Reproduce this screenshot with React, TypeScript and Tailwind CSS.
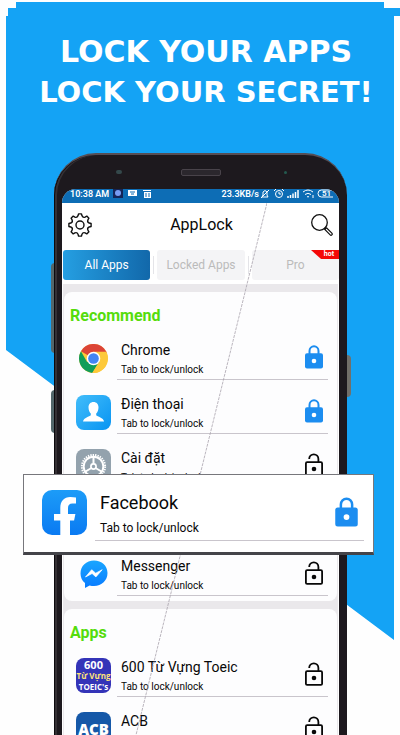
import React from "react";

const toothed = (teeth: number, outer: number, inner: number) => {
  const step = (Math.PI * 2) / teeth;
  const at = (r: number, a: number) =>
    `${(12 + r * Math.sin(a)).toFixed(2)} ${(12 - r * Math.cos(a)).toFixed(2)}`;
  let d = "";
  for (let i = 0; i < teeth; i++) {
    const a = i * step;
    d += `${i === 0 ? "M" : "L"}${at(outer, a - step * 0.17)}`;
    d += `L${at(outer, a + step * 0.17)}`;
    d += `L${at(inner + 0.4, a + step * 0.27)}`;
    d += `Q${at(inner - 1.4, a + step * 0.5)} ${at(inner + 0.4, a + step * 0.73)}`;
  }
  return d + "Z";
};

function GearIcon() {
  return (
    <svg viewBox="0 0 24 24" className="size-6" fill="none" stroke="#111" strokeWidth="1.4" strokeLinejoin="round">
      <path d={toothed(8, 11.2, 9)} />
      <circle cx="12" cy="12" r="4" />
    </svg>
  );
}

function SearchIcon() {
  return (
    <svg viewBox="0 0 22 22" className="size-[22px]" fill="none" stroke="#111" strokeLinecap="round">
      <circle cx="8.5" cy="8.5" r="7.8" strokeWidth="1.3" />
      <path d="M14.8 14.8 20 20" strokeWidth="3.6" />
      <path d="M15.4 15.4 20 20" strokeWidth="1.2" stroke="#fff" />
    </svg>
  );
}

function LockIcon({ locked, large = false }: { locked: boolean; large?: boolean }) {
  return (
    <svg viewBox="0 0 18 24" className={large ? "h-[30px] w-[23px]" : "h-6 w-[18px]"} fill="none">
      {locked ? (
        <>
          <path d="M4.5 10V6a4.5 4.7 0 0 1 9 0v4" stroke="#1c8df0" strokeWidth="2" />
          <rect x="0" y="8.3" width="18" height="15.2" rx="2" fill="#1c8df0" />
          <circle cx="9" cy="16" r="2.3" fill="#fff" />
        </>
      ) : (
        <>
          <path d="M4.2 6a4.6 4.7 0 0 1 9.2 0v3" stroke="#080808" strokeWidth="1.8" />
          <rect x="0.9" y="9.2" width="16.2" height="13.7" rx="1.2" stroke="#080808" strokeWidth="1.8" />
          <circle cx="9" cy="16" r="2.3" fill="#080808" />
        </>
      )}
    </svg>
  );
}

function ChromeIcon() {
  return (
    <svg viewBox="0 0 48 48" className="size-[29px]">
      <circle cx="24" cy="24" r="24" fill="#fdc93a" />
      <path d="M24 24 3.2 12A24 24 0 0 1 44.8 12L46 14H24Z" fill="#dc4437" />
      <path d="M3.2 12A24 24 0 0 0 22 47.9L33.5 29.5 24 24 13.6 30Z" fill="#109d59" />
      <path d="M44.8 13H24L33.5 29.5 22 47.9A24 24 0 0 0 44.8 13Z" fill="#fdc93a" />
      <circle cx="24" cy="24" r="11.2" fill="#fff" />
      <circle cx="24" cy="24" r="8.8" fill="#4285f4" />
    </svg>
  );
}

function ContactIcon() {
  return (
    <svg viewBox="0 0 35 35" className="size-[35px]">
      <defs>
        <linearGradient id="contact" x1="0" y1="0" x2="1" y2="1">
          <stop stopColor="#42bdfa" />
          <stop offset="1" stopColor="#0894f2" />
        </linearGradient>
      </defs>
      <rect width="35" height="35" rx="8" fill="url(#contact)" />
      <path d="M17.5 7c3 0 5 2.200 5 5.300 0 2.900-1 5-2.300 6.200v1.700c1.200 1.500 7.300 2.200 7.900 6.300H7c.6-4.100 6.500-4.800 7.800-6.300v-1.700c-1.300-1.200-2.300-3.300-2.300-6.200C12.500 9.200 14.500 7 17.500 7Z" fill="#fff" />
    </svg>
  );
}

function CogTileIcon() {
  return (
    <svg viewBox="0 0 35 35" className="size-[35px]">
      <rect width="35" height="35" rx="8" fill="#93a2ad" />
      <g fill="none" stroke="#fff">
        <circle cx="17.500" cy="17.500" r="11.600" strokeWidth="2" strokeDasharray="1.400 1.030" />
        <circle cx="17.500" cy="17.500" r="9.800" strokeWidth="1.900" />
        <path d="M17.500 15V8M15.500 19 9.500 22.500M19.500 19l6 3.500" strokeWidth="2" />
        <circle cx="17.500" cy="17.500" r="2.600" strokeWidth="1.700" />
      </g>
    </svg>
  );
}

function MessengerIcon() {
  return (
    <svg viewBox="0 0 28 29" className="h-[29px] w-7">
      <defs>
        <linearGradient id="chat" x1="0" y1="0" x2="0" y2="1">
          <stop stopColor="#19a6ff" />
          <stop offset="1" stopColor="#087bff" />
        </linearGradient>
      </defs>
      <path d="M14 .5C6.300.500.500 6 .500 13.400c0 4 1.700 7.200 4.500 9.600V28l4.600-2.600c1.400.4 2.900.6 4.400.6 7.700 0 13.500-5.500 13.500-12.900S21.700.5 14 .5Z" fill="url(#chat)" />
      <path d="m5.500 17 6.200-7.300 4 3.500 6.500-3.500-6.300 7.200-3.800-3.400Z" fill="#fff" stroke="#fff" strokeWidth=".7" strokeLinejoin="round" />
    </svg>
  );
}

function FacebookIcon() {
  return (
    <svg viewBox="0 0 45 45" className="size-[45px] shrink-0">
      <defs>
        <linearGradient id="fb" x1="0" y1="0" x2="0" y2="1">
          <stop stopColor="#1c9cf8" />
          <stop offset="1" stopColor="#0a7af2" />
        </linearGradient>
      </defs>
      <rect width="45" height="45" rx="10" fill="url(#fb)" />
      <path d="M18.300 45V30.500H12V24h6.300V18c0-7 3.700-11 10-11 2.200 0 4 .2 5.700.5v6h-3.600c-3 0-4.400 1.500-4.400 4.500v6h7.400l-1.300 6.500H28V45Z" fill="#fff" />
    </svg>
  );
}

function ToeicIcon() {
  return (
    <span className="flex size-[35px] flex-col items-center justify-between overflow-hidden rounded-lg bg-[#3434b8] py-px font-['Open_Sans',sans-serif] leading-[11px] font-bold whitespace-nowrap text-white">
      <span className="text-[11px]">600</span>
      <span className="text-[8px] text-[#ffe37a]">Từ Vựng</span>
      <span className="text-[8px]">TOEIC's</span>
    </span>
  );
}

function AcbIcon() {
  return (
    <span className="flex size-[35px] items-end justify-center rounded-lg bg-[#1558a8] pb-2 font-['Open_Sans',sans-serif] text-[15px] leading-5 font-extrabold text-white">
      ACB
    </span>
  );
}

function AppRow({ name, icon, locked = false }: { name: string; icon: React.ReactNode; locked?: boolean }) {
  return (
    <li className="flex h-[54px] items-end pr-[9px] pl-3">
      <span className="mb-1 flex size-[35px] shrink-0 items-center justify-center">{icon}</span>
      <div className="ml-[6px] flex h-full min-w-0 grow items-center justify-between border-b border-[#c9c5cc] pr-[5px] pl-1">
        <div className="pt-[14px]">
          <h3 className="text-[14px] leading-5">{name}</h3>
          <p className="text-[10px] leading-5">Tab to lock/unlock</p>
        </div>
        <button type="button" aria-label={`${locked ? "Unlock" : "Lock"} ${name}`} className="pt-2">
          <LockIcon locked={locked} />
        </button>
      </div>
    </li>
  );
}

function FeaturedRow() {
  return (
    <li className="relative z-10 h-[54px]">
      <article className="absolute -top-[14px] -right-[37px] -left-[41px] flex h-[81px] items-start border-t border-r border-b-3 border-l border-[#77777c] border-b-[#444449] bg-white pt-[15px] pr-[9px] pl-[18px]">
        <FacebookIcon />
        <div className="ml-2 flex h-[51px] grow items-start justify-between border-b border-[#c9c5cc] pr-[6px] pl-[5px]">
          <div>
            <h3 className="text-[18px] leading-[26px]">Facebook</h3>
            <p className="text-[12px] leading-6">Tab to lock/unlock</p>
          </div>
          <button type="button" aria-label="Unlock Facebook" className="pt-[7px]">
            <LockIcon locked large />
          </button>
        </div>
      </article>
    </li>
  );
}

function Group({ title, children }: { title: string; children: React.ReactNode }) {
  return (
    <section className="rounded-lg bg-[#fdfdfe] pt-3 pb-[5px]">
      <h2 className="h-[22px] pl-[6px] text-[16px] leading-6 font-bold text-[#55dc0c]">{title}</h2>
      <ul>{children}</ul>
    </section>
  );
}

function StatusBar() {
  return (
    <div className="flex h-[14px] items-start justify-between overflow-hidden rounded-t-[14px] bg-[#0d6db5] pr-[6px] pl-2 text-[9px] leading-[10px] font-semibold whitespace-nowrap text-white">
      <div className="flex items-center gap-1">
        <span>10:38 AM</span>
        <svg viewBox="0 0 38 10" className="h-[10px] w-[38px]">
          <rect width="10" height="9" fill="#142558" />
          <circle cx="5" cy="4" r="3" fill="#779cf2" />
          <path d="M15 1h9v6h-9zM31 3h7v6h-7zM30 1h8v1h-8z" fill="#fff" />
          <path d="M17 3h5M18 5h3M33 4v4M36 4v4" stroke="#0d6db5" />
        </svg>
      </div>
      <div className="flex items-center">
        <span>23.3KB/s</span>
        <svg viewBox="0 0 74 10" className="h-[10px] w-[74px]" fill="none" stroke="#fff">
          <path d="M3 8h6L8 6V3Q6 0 4 3v3ZM2 9l8-8" />
          <circle cx="20" cy="5" r="3.500" />
          <path d="M20 3v2h2M15 2l2-2M25 2l-2-2" />
          <path d="M29 9V7M31.500 9V6M34 9V4.500M36.500 9V3M39 9V1" strokeWidth="1.500" />
          <path d="M44 3q5-4 10 0M46 5.500q3-2.500 6 0M48 8q1-1 2 0M54 6v3" />
          <path d="M74 1H62.500a3.500 3.500 0 0 0 0 7H74" />
        </svg>
        <span className="-ml-[11px] w-[11px] text-[8px]">51</span>
      </div>
    </div>
  );
}

function Tabs() {
  return (
    <nav className="flex h-[34px] items-start justify-between bg-white pl-px text-[12px]">
      <button type="button" className="h-[30px] flex-1 rounded-[3px] bg-linear-to-r from-[#259fe2] to-[#1268aa] text-white">
        All Apps
      </button>
      <span className="mx-[3px] mt-[6px] h-[18px] w-px bg-[#e4e4e8]" />
      <button type="button" className="h-[30px] flex-1 rounded-[3px] bg-[#f4f4f6] text-[#bbb]">
        Locked Apps
      </button>
      <span className="mx-[3px] mt-[6px] h-[18px] w-px bg-[#e4e4e8]" />
      <button type="button" className="relative h-[30px] flex-1 rounded-[3px] bg-[#f4f4f6] text-[#bbb]">
        Pro
        <span className="absolute top-0 right-0 h-[9px] w-7 bg-[#f40808] pl-2 text-[7px] leading-[9px] font-bold text-white [clip-path:polygon(0_0,100%_0,100%_100%,36%_100%)]">
          hot
        </span>
      </button>
    </nav>
  );
}

export default function App() {
  return (
    <main className="relative h-screen w-full overflow-hidden bg-[#fefefe] font-[Roboto,'Noto_Sans',sans-serif] text-[#080808]">
      <div className="absolute inset-x-0 top-0 h-[640px] bg-[#14a3f5] [clip-path:polygon(16px_2px,calc(100%-16px)_2px,calc(100%-16px)_8px,100%_8px,100%_16px,calc(100%-6px)_16px,calc(100%-6px)_100%,6px_350px,6px_16px,8px_16px,8px_8px,16px_8px)]" />

      <div className="relative">
        <h1 className="flex flex-col items-center pt-8 pl-3 font-['DejaVu_Sans',sans-serif] font-bold whitespace-nowrap text-white">
          <span className="text-[30px] leading-10">LOCK YOUR APPS</span>
          <span className="text-[29px] leading-10">LOCK YOUR SECRET!</span>
        </h1>

        <div className="relative mt-[41px] mr-[53px] ml-[54px]">
          <span className="absolute top-[110px] -left-[3px] h-[90px] w-1 rounded-l-sm bg-[#53676b]" />
          <span className="absolute top-[237px] -left-[3px] h-[43px] w-1 rounded-l-sm bg-[#53676b]" />
          <span className="absolute top-[202px] -right-1 h-[42px] w-[5px] rounded-r-sm bg-[#716f69]" />

          <div className="relative rounded-t-[42px] border-t-2 border-[#564e55] bg-[#1d191e] px-2 shadow-[inset_1px_0_0_#0c0a0d,inset_3px_0_0_#343034]">
            <div className="flex h-[34px] items-center justify-center">
              <span className="h-[7px] w-10 rounded-[2px] border border-[#49434a] bg-[#2b272d]" />
            </div>
            <span className="absolute top-[15px] left-[62px] h-1 w-[6px] rounded-full bg-[#34484b]" />
            <span className="absolute top-4 right-[60px] size-[3px] rounded-full bg-[#24594f]" />

            <div className="rounded-t-[14px] bg-[#eae8eb]">
              <StatusBar />
              <header className="flex h-[47px] items-center justify-between bg-white pr-[6px] pb-1 pl-[6px]">
                <button type="button" aria-label="Settings">
                  <GearIcon />
                </button>
                <p className="text-[16px]">AppLock</p>
                <button type="button" aria-label="Search">
                  <SearchIcon />
                </button>
              </header>
              <Tabs />
              <div className="flex flex-col gap-2 border-x border-white px-px pt-2">
                <Group title="Recommend">
                  <AppRow name="Chrome" icon={<ChromeIcon />} locked />
                  <AppRow name="Điện thoại" icon={<ContactIcon />} locked />
                  <AppRow name="Cài đặt" icon={<CogTileIcon />} />
                  <FeaturedRow />
                  <AppRow name="Messenger" icon={<MessengerIcon />} />
                </Group>
                <Group title="Apps">
                  <AppRow name="600 Từ Vựng Toeic" icon={<ToeicIcon />} />
                  <AppRow name="ACB" icon={<AcbIcon />} />
                </Group>
              </div>
            </div>
          </div>

          <svg className="pointer-events-none absolute top-[50px] left-20 h-[532px] w-[133px]" viewBox="0 0 133 532" fill="none">
            <path d="M133 0 2 532" stroke="#a9a3ad" strokeWidth=".8" strokeDasharray="3 1" />
          </svg>
        </div>
      </div>
    </main>
  );
}
